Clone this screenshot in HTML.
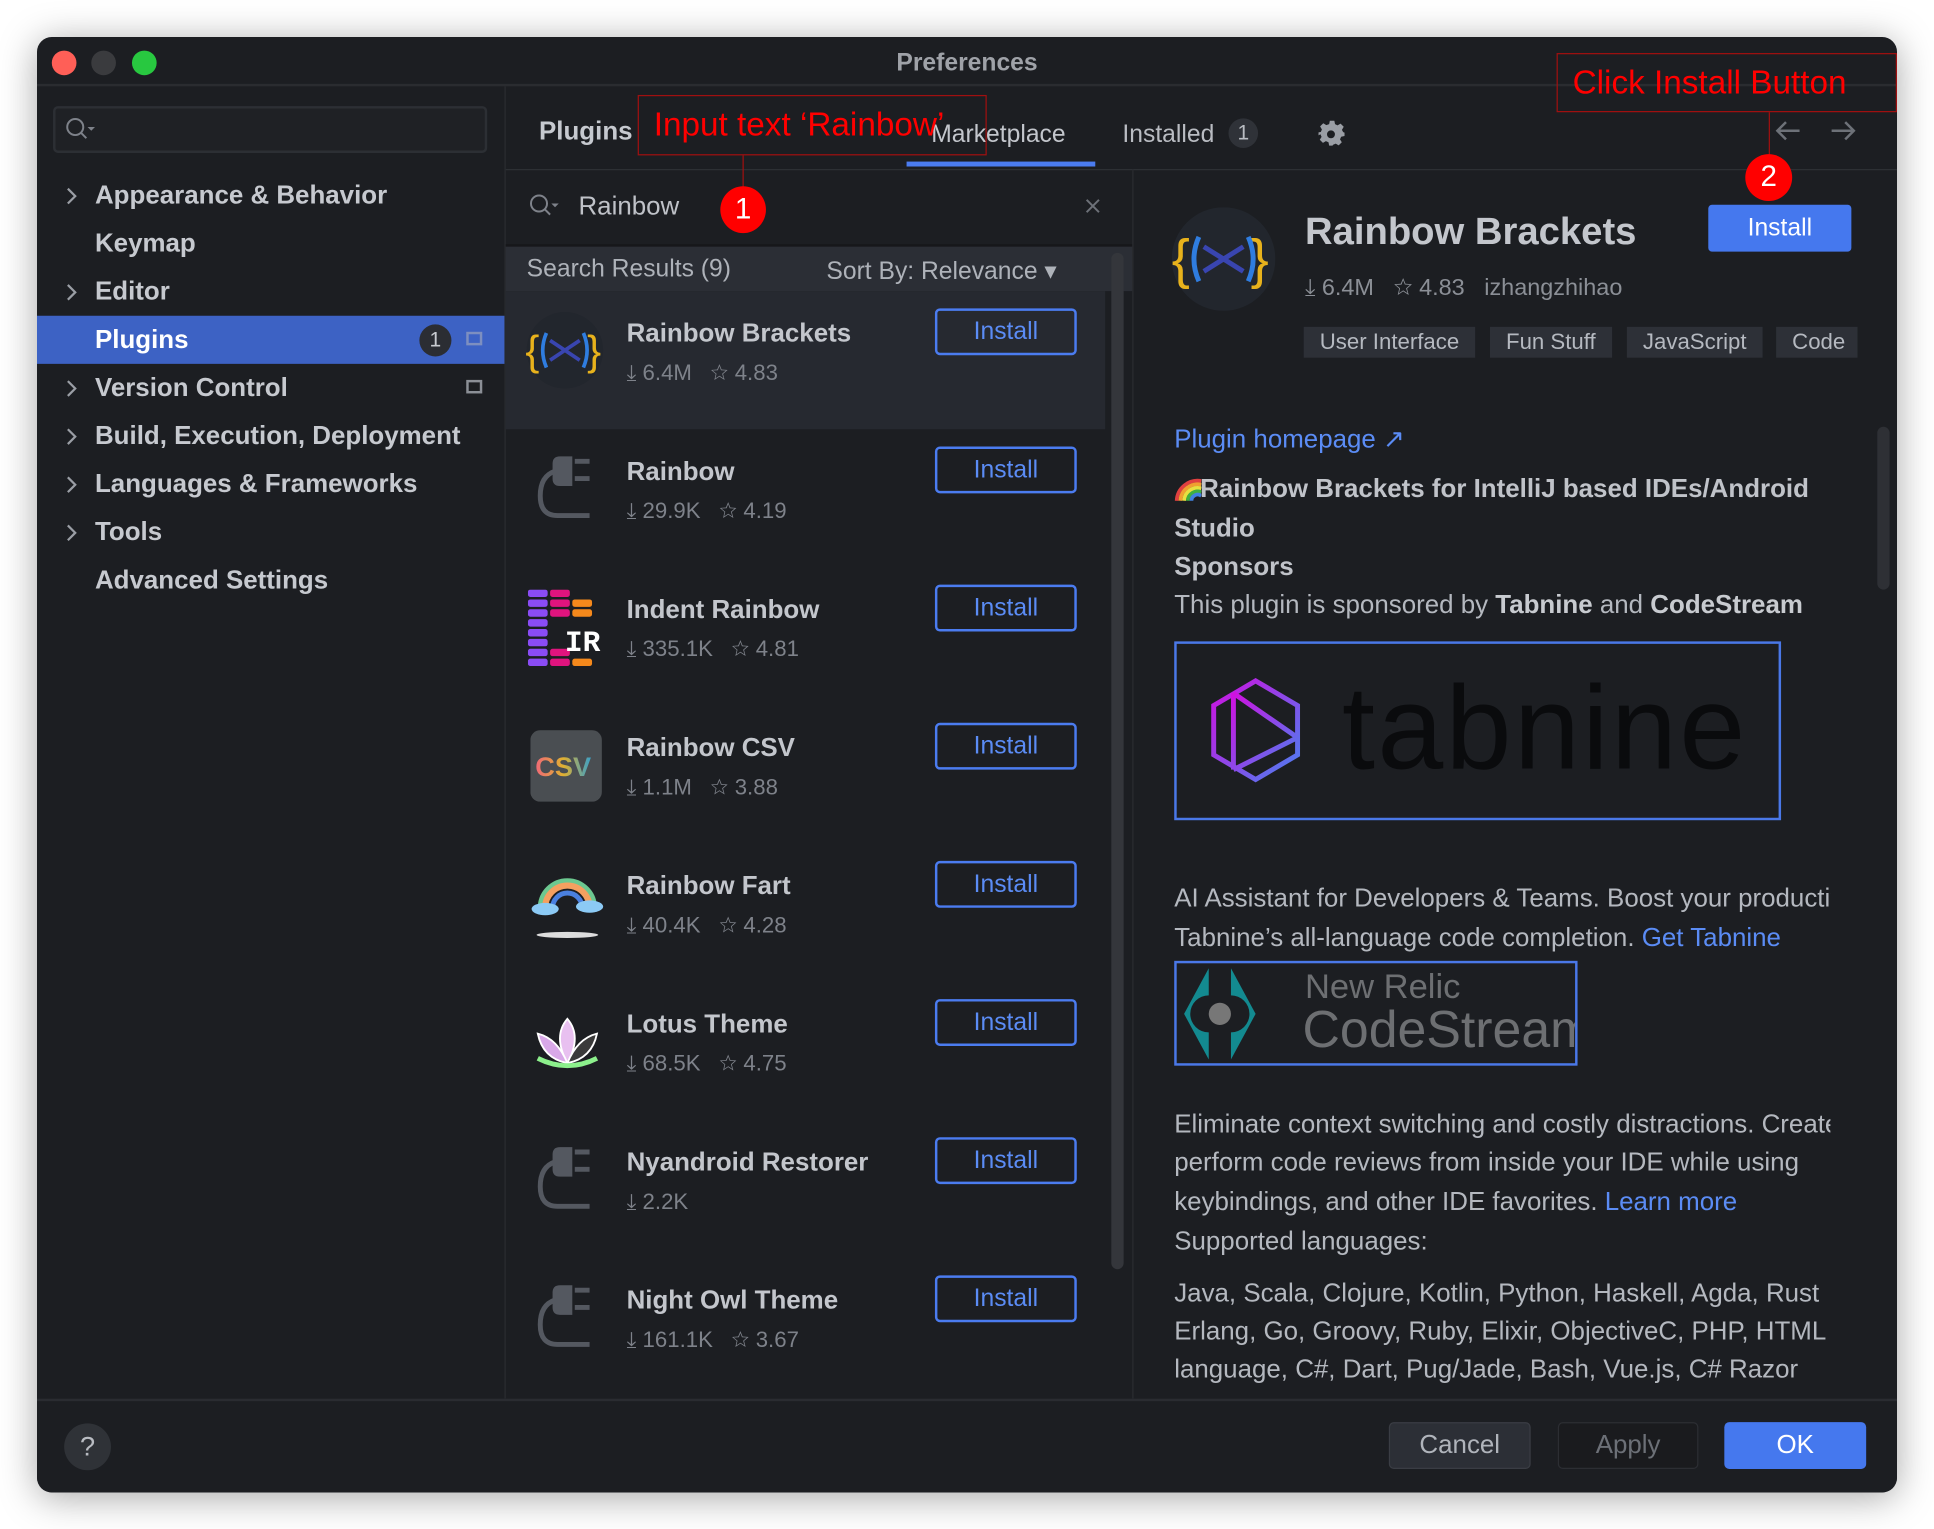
<!DOCTYPE html>
<html><head><meta charset="utf-8"><style>
*{margin:0;padding:0;box-sizing:border-box}
html,body{width:1934px;height:1528px;overflow:hidden;background:#fff}
#s{position:absolute;left:0;top:0;width:1568px;height:1240px;transform:scale(1.23342);transform-origin:0 0;font-family:"Liberation Sans",sans-serif}
.a{position:absolute;white-space:nowrap}
.win{position:absolute;left:30px;top:30px;width:1508px;height:1180px;background:#1c1e22;border-radius:12px;overflow:hidden;box-shadow:0 4px 30px rgba(0,0,0,.35)}
.t{color:#c6c9cf;font-size:21px;font-weight:bold}
.ib{position:absolute;left:728px;width:115px;height:38px;border:2px solid #4b7cf0;border-radius:4px;color:#5b8cf5;font-size:20px;text-align:center;line-height:34px}
.nm{position:absolute;left:478px;color:#c3c6cc;font-size:21px;font-weight:bold}
.mt{position:absolute;left:478px;color:#7e828a;font-size:18px}
.tag{position:absolute;top:235px;height:25px;background:#2d3037;color:#b5b9c0;font-size:18px;line-height:25px;padding:0 13px}
.p{position:absolute;left:922px;color:#b4b8bf;font-size:21px;white-space:nowrap;width:532px;overflow:hidden}
.lk{color:#5b8cf5}
.red{color:#ff0000;font-size:27px}
</style></head><body><div id="s">
<div class="win">
 <div class="a" style="left:12px;top:11px;width:20px;height:20px;border-radius:50%;background:#ff5f57"></div>
 <div class="a" style="left:44px;top:11px;width:20px;height:20px;border-radius:50%;background:#3a3b3e"></div>
 <div class="a" style="left:77px;top:11px;width:20px;height:20px;border-radius:50%;background:#28c840"></div>
 <div class="a" style="left:0;width:1508px;top:10px;text-align:center;color:#9fa2a8;font-size:20px;font-weight:bold">Preferences</div>
 <div class="a" style="left:0;top:38px;width:1508px;height:2px;background:#2a2c30"></div>
 <div class="a" style="left:13px;top:56px;width:352px;height:38px;border:2px solid #2c2f34;border-radius:4px;background:#1f2125"></div>
 <svg class="a" style="left:22px;top:64px" width="28" height="22"><circle cx="9" cy="9" r="6.5" fill="none" stroke="#7e828a" stroke-width="1.6"/><line x1="13.5" y1="13.5" x2="18" y2="18" stroke="#7e828a" stroke-width="1.6"/><path d="M19 9h6l-3 3z" fill="#7e828a"/></svg>
 <div class="a" style="left:0;top:226px;width:379px;height:39px;background:#3d62c4"></div>
 <div class="a t" style="left:47px;top:117px">Appearance &amp; Behavior</div>
 <div class="a t" style="left:47px;top:156px">Keymap</div>
 <div class="a t" style="left:47px;top:195px">Editor</div>
 <div class="a t" style="left:47px;top:234px;color:#fff">Plugins</div>
 <div class="a t" style="left:47px;top:273px">Version Control</div>
 <div class="a t" style="left:47px;top:312px">Build, Execution, Deployment</div>
 <div class="a t" style="left:47px;top:351px">Languages &amp; Frameworks</div>
 <div class="a t" style="left:47px;top:390px">Tools</div>
 <div class="a t" style="left:47px;top:429px">Advanced Settings</div>
 <svg class="a" style="left:20px;top:120px" width="16" height="320" fill="none" stroke="#9a9ea5" stroke-width="1.8"><path d="M5 3l6 6-6 6"/><path d="M5 81l6 6-6 6"/><path d="M5 159l6 6-6 6"/><path d="M5 198l6 6-6 6"/><path d="M5 237l6 6-6 6"/><path d="M5 276l6 6-6 6"/></svg>
 <div class="a" style="left:310px;top:233px;width:26px;height:26px;border-radius:13px;background:#2b2d33;color:#c8cbd0;font-size:17px;text-align:center;line-height:26px">1</div>
 <div class="a" style="left:348px;top:239px;width:13px;height:11px;border:2px solid #7d8fc0"></div>
 <div class="a" style="left:348px;top:278px;width:13px;height:11px;border:2px solid #8b8f96"></div>
 <div class="a" style="left:379px;top:40px;width:1px;height:1064px;background:#2a2c30"></div>
 <div class="a t" style="left:407px;top:65px;color:#c6c9cf">Plugins</div>
 <div class="a" style="left:725px;top:68px;color:#c3c6cc;font-size:20px">Marketplace</div>
 <div class="a" style="left:705px;top:101px;width:153px;height:4px;background:#4b7cf0"></div>
 <div class="a" style="left:880px;top:68px;color:#b9bcc2;font-size:20px">Installed</div>
 <div class="a" style="left:966px;top:66px;width:24px;height:24px;border-radius:12px;background:#2f3238;color:#b9bcc2;font-size:17px;text-align:center;line-height:24px">1</div>
 <svg class="a" style="left:1039px;top:67px" width="22" height="22" viewBox="0 0 24 24"><path fill="#9a9ea5" d="M10 1h4l.6 3 2.2 1.1 2.7-1.6 2.8 2.8-1.6 2.7L21.8 11 23 11.5v3l-3 .6-1 2.3 1.6 2.6-2.8 2.8-2.6-1.6-2.3 1L12.4 23h-3l-.6-3-2.3-1-2.6 1.6-2.8-2.8 1.6-2.6-1-2.3L-1 14.5v-3l3-.6 1-2.2-1.6-2.7 2.8-2.8 2.7 1.6L9.4 4z"/><circle cx="11" cy="13" r="3.5" fill="#1c1e22"/></svg>
 <svg class="a" style="left:1408px;top:66px" width="70" height="20" fill="none" stroke="#6d7178" stroke-width="2"><path d="M3 10h18M10 3L3 10l7 7"/><path d="M47 10h18M58 3l7 7-7 7"/></svg>
 <div class="a" style="left:380px;top:107px;width:1128px;height:1px;background:#2d3034"></div>
 <svg class="a" style="left:398px;top:126px" width="30" height="22"><circle cx="9" cy="9" r="6.5" fill="none" stroke="#7e828a" stroke-width="1.6"/><line x1="13.5" y1="13.5" x2="18" y2="18" stroke="#7e828a" stroke-width="1.6"/><path d="M19 9h6l-3 3z" fill="#7e828a"/></svg>
 <div class="a" style="left:439px;top:126px;color:#bfc2c8;font-size:21px">Rainbow</div>
 <svg class="a" style="left:849px;top:130px" width="14" height="14" stroke="#6d7178" stroke-width="1.6"><path d="M2 2l10 10M12 2L2 12"/></svg>
 <div class="a" style="left:380px;top:168px;width:508px;height:2px;background:#16171a"></div>
 <div class="a" style="left:380px;top:170px;width:508px;height:36px;background:#2b2e35"></div>
 <div class="a" style="left:397px;top:177px;color:#aeb2b9;font-size:20px">Search Results (9)</div>
 <div class="a" style="left:640px;top:177px;color:#aeb2b9;font-size:20px">Sort By: Relevance ▾</div>
 <div class="a" style="left:380px;top:206px;width:486px;height:112px;background:#262930"></div>
 <div class="a" style="left:871px;top:175px;width:10px;height:824px;border-radius:5px;background:#34363b"></div>
 <div class="a" style="left:888px;top:107px;width:1px;height:997px;background:#2a2c30"></div>
 <div class="nm" style="top:229px">Rainbow Brackets</div><div class="mt" style="top:262px">⤓ 6.4M &nbsp; ☆ 4.83</div><div class="ib" style="top:220px">Install</div>
 <div class="nm" style="top:341px">Rainbow</div><div class="mt" style="top:374px">⤓ 29.9K &nbsp; ☆ 4.19</div><div class="ib" style="top:332px">Install</div>
 <div class="nm" style="top:453px">Indent Rainbow</div><div class="mt" style="top:486px">⤓ 335.1K &nbsp; ☆ 4.81</div><div class="ib" style="top:444px">Install</div>
 <div class="nm" style="top:565px">Rainbow CSV</div><div class="mt" style="top:598px">⤓ 1.1M &nbsp; ☆ 3.88</div><div class="ib" style="top:556px">Install</div>
 <div class="nm" style="top:677px">Rainbow Fart</div><div class="mt" style="top:710px">⤓ 40.4K &nbsp; ☆ 4.28</div><div class="ib" style="top:668px">Install</div>
 <div class="nm" style="top:789px">Lotus Theme</div><div class="mt" style="top:822px">⤓ 68.5K &nbsp; ☆ 4.75</div><div class="ib" style="top:780px">Install</div>
 <div class="nm" style="top:901px">Nyandroid Restorer</div><div class="mt" style="top:934px">⤓ 2.2K</div><div class="ib" style="top:892px">Install</div>
 <div class="nm" style="top:1013px">Night Owl Theme</div><div class="mt" style="top:1046px">⤓ 161.1K &nbsp; ☆ 3.67</div><div class="ib" style="top:1004px">Install</div>
 <svg class="a" style="left:396px;top:222px" width="64" height="64"><circle cx="32" cy="32" r="31" fill="#22262d"/><text x="0" y="44" font-size="34" fill="#e8b21c" font-family="Liberation Sans">{</text><text x="50" y="44" font-size="34" fill="#e8b21c" font-family="Liberation Sans">}</text><path d="M17 18q-6 14 0 28M47 18q6 14 0 28" stroke="#2f7de0" stroke-width="3" fill="none"/><path d="M20 24l12 8-12 8M44 24l-12 8 12 8" stroke="#3945b0" stroke-width="3" fill="none"/></svg>
 <svg class="a" style="left:400px;top:336px" width="60" height="60"><path d="M24 4h10v24H24q-6 0-6-6V10q0-6 6-6z" fill="#545860"/><path d="M36 8h12M36 22h12" stroke="#545860" stroke-width="4"/><path d="M20 16q-12 4-12 20t14 16h26" stroke="#545860" stroke-width="4" fill="none"/></svg>
 <svg class="a" style="left:398px;top:448px" width="64" height="64"><g fill="#8a4cf5"><rect x="0" y="0" width="16" height="6" rx="2"/><rect x="0" y="8" width="16" height="6" rx="2"/><rect x="0" y="16" width="16" height="6" rx="2"/><rect x="0" y="24" width="16" height="6" rx="2"/><rect x="0" y="32" width="16" height="6" rx="2"/><rect x="0" y="40" width="16" height="6" rx="2"/><rect x="0" y="48" width="16" height="6" rx="2"/><rect x="0" y="56" width="16" height="6" rx="2"/></g><g fill="#e0147e"><rect x="18" y="0" width="16" height="6" rx="2"/><rect x="18" y="8" width="16" height="6" rx="2"/><rect x="18" y="16" width="16" height="6" rx="2"/><rect x="18" y="48" width="16" height="6" rx="2"/><rect x="18" y="56" width="16" height="6" rx="2"/></g><g fill="#f5891c"><rect x="36" y="8" width="16" height="6" rx="2"/><rect x="36" y="16" width="16" height="6" rx="2"/><rect x="36" y="56" width="16" height="6" rx="2"/></g><text x="30" y="50" font-size="24" font-weight="bold" fill="#fff" font-family="Liberation Mono">IR</text></svg>
 <svg class="a" style="left:400px;top:562px" width="58" height="58"><rect width="58" height="58" rx="8" fill="#4a4e52"/><defs><linearGradient id="g" x1="0" x2="1"><stop offset="0" stop-color="#f06878"/><stop offset=".5" stop-color="#e0b030"/><stop offset="1" stop-color="#3aa0c8"/></linearGradient></defs><text x="4" y="37" font-size="22" font-weight="bold" fill="url(#g)" font-family="Liberation Sans">CSV</text></svg>
 <svg class="a" style="left:400px;top:680px" width="60" height="56"><path d="M8 26a22 22 0 0 1 44 0" stroke="#6cc890" stroke-width="4" fill="none"/><path d="M12 26a18 18 0 0 1 36 0" stroke="#f5a060" stroke-width="5" fill="none"/><path d="M18 26a12 12 0 0 1 24 0" stroke="#4a80e0" stroke-width="4" fill="none"/><ellipse cx="12" cy="27" rx="11" ry="5" fill="#8ccaf5"/><ellipse cx="48" cy="25" rx="11" ry="5" fill="#8ccaf5"/><ellipse cx="30" cy="48" rx="25" ry="2.5" fill="#ddd"/></svg>
 <svg class="a" style="left:400px;top:792px" width="60" height="48"><path d="M30 4q-12 14 0 36q12-22 0-36z" fill="#e8c0f0" stroke="#fff" stroke-width="1.5"/><path d="M30 40q-20-4-24-24q16 4 24 24z" fill="#d8a8e8" stroke="#fff" stroke-width="1.5"/><path d="M30 40q20-4 24-24q-16 4-24 24z" fill="#3a3a3a" stroke="#fff" stroke-width="1.5"/><path d="M6 36q24 12 48 0" stroke="#8cf08c" stroke-width="4" fill="none"/></svg>
 <svg class="a" style="left:400px;top:896px" width="60" height="60"><path d="M24 4h10v24H24q-6 0-6-6V10q0-6 6-6z" fill="#545860"/><path d="M36 8h12M36 22h12" stroke="#545860" stroke-width="4"/><path d="M20 16q-12 4-12 20t14 16h26" stroke="#545860" stroke-width="4" fill="none"/></svg>
 <svg class="a" style="left:400px;top:1008px" width="60" height="60"><path d="M24 4h10v24H24q-6 0-6-6V10q0-6 6-6z" fill="#545860"/><path d="M36 8h12M36 22h12" stroke="#545860" stroke-width="4"/><path d="M20 16q-12 4-12 20t14 16h26" stroke="#545860" stroke-width="4" fill="none"/></svg>
 <svg class="a" style="left:920px;top:138px" width="84" height="84"><circle cx="42" cy="42" r="42" fill="#22262d"/><text x="0" y="57" font-size="44" fill="#e8b21c" font-family="Liberation Sans">{</text><text x="64" y="57" font-size="44" fill="#e8b21c" font-family="Liberation Sans">}</text><path d="M22 24q-8 18 0 36M62 24q8 18 0 36" stroke="#2f7de0" stroke-width="4" fill="none"/><path d="M26 32l16 10-16 10M58 32L42 42l16 10" stroke="#3945b0" stroke-width="4" fill="none"/></svg>
 <div class="a" style="left:1028px;top:140px;color:#c3c6cc;font-size:31px;font-weight:bold">Rainbow Brackets</div>
 <div class="a" style="left:1355px;top:136px;width:116px;height:38px;background:#4578ee;border-radius:3px;color:#fff;font-size:20px;text-align:center;line-height:38px">Install</div>
 <div class="a" style="left:1028px;top:193px;color:#8b8f96;font-size:19px">⤓ 6.4M &nbsp; ☆ 4.83 &nbsp; izhangzhihao</div>
 <div class="tag" style="left:1027px">User Interface</div>
 <div class="tag" style="left:1178px">Fun Stuff</div>
 <div class="tag" style="left:1289px">JavaScript</div>
 <div class="tag" style="left:1410px;width:66px;overflow:hidden">Code E</div>
 <div class="p lk" style="top:314px">Plugin homepage ↗</div>
 <svg class="a" style="left:922px;top:357px" width="22" height="20"><path d="M2 19a17 17 0 0 1 20-16" stroke="#e04040" stroke-width="3" fill="none"/><path d="M5 19a14 14 0 0 1 17-13" stroke="#f0a030" stroke-width="3" fill="none"/><path d="M8 19a11 11 0 0 1 14-10" stroke="#e8e040" stroke-width="3" fill="none"/><path d="M11 19a8 8 0 0 1 11-7" stroke="#40b040" stroke-width="3" fill="none"/><path d="M14 19a5 5 0 0 1 8-4" stroke="#4080e0" stroke-width="3" fill="none"/></svg>
 <div class="p" style="top:355px;left:943px;width:511px;font-weight:bold;color:#c0c3c9">Rainbow Brackets for IntelliJ based IDEs/Android</div>
 <div class="p" style="top:387px;font-weight:bold;color:#c0c3c9">Studio</div>
 <div class="p" style="top:418px;font-weight:bold;color:#c0c3c9">Sponsors</div>
 <div class="p" style="top:449px">This plugin is sponsored by <b style="color:#c8cbd0">Tabnine</b> and <b style="color:#c8cbd0">CodeStream</b></div>
 <div class="a" style="left:922px;top:490px;width:492px;height:145px;border:2px solid #4a78e8"></div>
 <svg class="a" style="left:948px;top:518px" width="80" height="90"><defs><linearGradient id="tb" x1="0" y1="0" x2="1" y2="1"><stop offset="0" stop-color="#d010e0"/><stop offset="1" stop-color="#4a80f0"/></linearGradient></defs><path d="M40 4L74 24v40L40 84 6 64V24z" fill="none" stroke="url(#tb)" stroke-width="4"/><path d="M22 14v62M22 14l52 36M22 76l52-26" fill="none" stroke="url(#tb)" stroke-width="4"/></svg>
 <div class="a" style="left:1058px;top:513px;color:#0a0b0d;font-size:96px;letter-spacing:2px;line-height:96px">tabnine</div>
 <div class="p" style="top:687px">AI Assistant for Developers &amp; Teams. Boost your productivity</div>
 <div class="p" style="top:719px">Tabnine’s all-language code completion. <span class="lk">Get Tabnine</span></div>
 <div class="a" style="left:922px;top:749px;width:327px;height:85px;border:2px solid #4a78e8;overflow:hidden">
  <svg class="a" style="left:4px;top:2px" width="62" height="78"><path d="M22 2L2 39l20 37v-22a14 14 0 0 1 0-30zM40 2l20 37-20 37v-22a14 14 0 0 0 0-30z" fill="#138a90"/><circle cx="31" cy="39" r="9" fill="#777"/></svg>
  <div class="a" style="left:104px;top:3px;color:#6d6f72;font-size:28px">New Relic</div>
  <div class="a" style="left:102px;top:30px;color:#6d6f72;font-size:42px">CodeStream</div>
 </div>
 <div class="p" style="top:870px">Eliminate context switching and costly distractions. Create and</div>
 <div class="p" style="top:901px">perform code reviews from inside your IDE while using</div>
 <div class="p" style="top:933px">keybindings, and other IDE favorites. <span class="lk">Learn more</span></div>
 <div class="p" style="top:965px">Supported languages:</div>
 <div class="p" style="top:1007px">Java, Scala, Clojure, Kotlin, Python, Haskell, Agda, Rust</div>
 <div class="p" style="top:1038px">Erlang, Go, Groovy, Ruby, Elixir, ObjectiveC, PHP, HTML</div>
 <div class="p" style="top:1069px">language, C#, Dart, Pug/Jade, Bash, Vue.js, C# Razor</div>
 <div class="a" style="left:1492px;top:316px;width:10px;height:132px;border-radius:5px;background:#2e3035"></div>
 <div class="a" style="left:0;top:1104px;width:1508px;height:76px;background:#1c1e22;border-top:2px solid #2a2c31"></div>
 <div class="a" style="left:22px;top:1124px;width:38px;height:38px;border-radius:50%;background:#2f3237;color:#b9bcc2;font-size:22px;text-align:center;line-height:38px">?</div>
 <div class="a" style="left:1096px;top:1123px;width:115px;height:38px;background:#2c2f36;border:1px solid #3a3d44;border-radius:4px;color:#b0b4bb;font-size:21px;text-align:center;line-height:36px">Cancel</div>
 <div class="a" style="left:1233px;top:1123px;width:114px;height:38px;background:#1a1b1e;border:1px solid #2c2e33;border-radius:4px;color:#6c7077;font-size:21px;text-align:center;line-height:36px">Apply</div>
 <div class="a" style="left:1368px;top:1123px;width:115px;height:38px;background:#4578ee;border-radius:4px;color:#fff;font-size:21px;text-align:center;line-height:38px">OK</div>
</div>
<div class="a" style="left:517px;top:77px;width:283px;height:49px;border:1.5px solid #a01010"></div>
<div class="a red" style="left:530px;top:86px">Input text ‘Rainbow’</div>
<div class="a" style="left:602px;top:126px;width:1px;height:28px;background:#a01010"></div>
<div class="a" style="left:584px;top:151px;width:37px;height:38px;border-radius:50%;background:#f00;color:#fff;font-size:24px;text-align:center;line-height:38px">1</div>
<div class="a" style="left:1262px;top:43px;width:276px;height:48px;border:1.5px solid #a01010"></div>
<div class="a red" style="left:1275px;top:52px">Click Install Button</div>
<div class="a" style="left:1434px;top:91px;width:1px;height:36px;background:#a01010"></div>
<div class="a" style="left:1415px;top:125px;width:38px;height:38px;border-radius:50%;background:#f00;color:#fff;font-size:24px;text-align:center;line-height:38px">2</div>
</div></body></html>
